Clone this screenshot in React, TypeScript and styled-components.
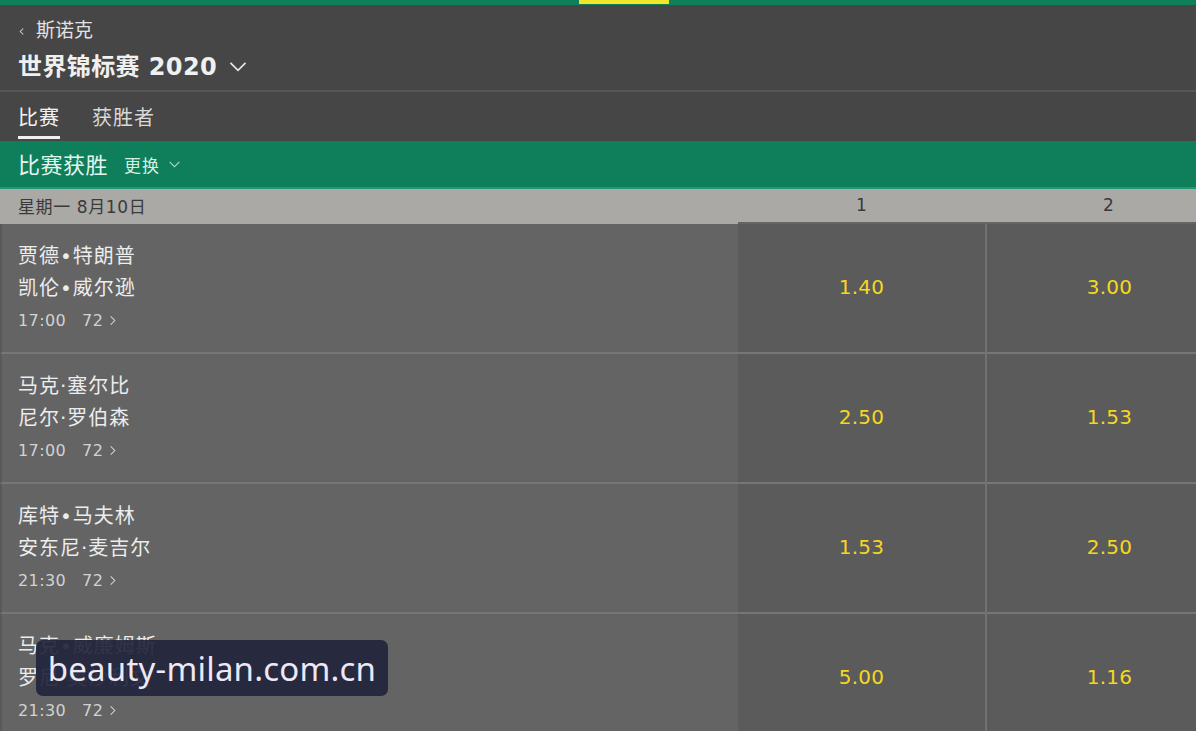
import * as React from 'react'
import styled, { createGlobalStyle } from 'styled-components'

const GlobalStyle = createGlobalStyle`
  html, body {
    margin: 0;
    padding: 0;
    background: #646464;
    overflow: hidden;
  }
  body {
    font-family: "DejaVu Sans", "Noto Sans CJK SC", sans-serif;
  }
`

type Match = {
  home: string
  away: string
  time: string
  markets: number
  odds: [string, string]
}

const matches: Match[] = [
  { home: '贾德•特朗普', away: '凯伦•威尔逊', time: '17:00', markets: 72, odds: ['1.40', '3.00'] },
  { home: '马克·塞尔比', away: '尼尔·罗伯森', time: '17:00', markets: 72, odds: ['2.50', '1.53'] },
  { home: '库特•马夫林', away: '安东尼·麦吉尔', time: '21:30', markets: 72, odds: ['1.53', '2.50'] },
  { home: '马克•威廉姆斯', away: '罗尼·奥沙利文', time: '21:30', markets: 72, odds: ['5.00', '1.16'] },
]

const Page = styled.div`
  position: relative;
  width: 1232px;
  min-height: 731px;
  background: #646464;
`

const TopBar = styled.div`
  position: relative;
  height: 5px;
  background: #0f7e5a;
  .active {
    position: absolute;
    left: 579px;
    top: 0;
    width: 90px;
    height: 4px;
    background: #f2e62a;
  }
`

const Header = styled.header`
  display: flex;
  flex-direction: column;
  height: 85px;
  padding: 0 18px;
  background: #464646;
  border-bottom: 2px solid #575757;
`

const Crumb = styled.div`
  display: flex;
  align-items: center;
  gap: 9px;
  margin-top: 12px;
  height: 22px;
  color: #e2e2e2;
  font-size: 19px;
  svg {
    margin-top: 7px;
  }
`

const Title = styled.h1`
  display: flex;
  align-items: center;
  gap: 11px;
  margin: 13px 0 0;
  color: #f0f0f0;
  font-size: 24px;
  font-weight: 700;
  line-height: 30px;
  letter-spacing: 0.4px;
`

const Tabs = styled.nav`
  display: flex;
  gap: 32px;
  height: 49px;
  padding: 0 18px;
  background: #464646;
`

const Tab = styled.div<{ $active?: boolean }>`
  display: flex;
  align-items: center;
  padding-top: 5px;
  color: ${(p) => (p.$active ? '#f4f4f4' : '#d8d8d8')};
  font-size: 20px;
  letter-spacing: 1px;
  box-sizing: border-box;
  border-bottom: 3px solid ${(p) => (p.$active ? '#f0f0f0' : 'transparent')};
  margin-bottom: 2px;
`

const MarketBar = styled.div`
  display: flex;
  align-items: center;
  gap: 16px;
  height: 43px;
  padding: 0 18px 3px;
  background: #0f7e5a;
  border-bottom: 2px solid #1f9a72;
  color: #e4f5ee;
  .name {
    font-size: 22px;
    letter-spacing: 0.5px;
  }
  .switch {
    display: flex;
    align-items: center;
    gap: 8px;
    padding-top: 3px;
    font-size: 17px;
    letter-spacing: 1px;
    color: #d6efe4;
  }
`

const Grid = styled.div`
  display: grid;
  grid-template-columns: 738px 247px 247px;
`

const DateRow = styled.div`
  display: contents;
  > div {
    height: 32px;
    display: flex;
    align-items: center;
    background: #aaa9a5;
    color: #3a3a3a;
    font-size: 17px;
  }
  > .date {
    padding: 0 18px 3px;
    letter-spacing: 0.6px;
  }
  > .col {
    justify-content: center;
    padding-bottom: 1px;
  }
`

const MatchCell = styled.div`
  display: flex;
  flex-direction: column;
  height: 130px;
  padding: 16px 16px 0;
  box-sizing: border-box;
  background: #646464;
  border-left: 2px solid #595959;
  border-bottom: 2px solid #767676;
  .player {
    color: #ececec;
    font-size: 20px;
    line-height: 32px;
    letter-spacing: 1px;
  }
  .meta {
    display: flex;
    align-items: center;
    gap: 16px;
    margin-top: 7px;
    color: #d2d2d2;
    font-size: 16px;
    letter-spacing: 0.4px;
  }
  .count {
    display: flex;
    align-items: center;
    gap: 4px;
  }
`

const OddsCell = styled.div`
  display: flex;
  align-items: center;
  justify-content: center;
  height: 130px;
  padding-bottom: 2px;
  box-sizing: border-box;
  background: #5b5b5b;
  border-left: 2px solid #717171;
  border-bottom: 2px solid #767676;
  color: #f5d81c;
  font-size: 20px;
  letter-spacing: 0.3px;
  &.first {
    border-left: none;
  }
`

const Watermark = styled.div`
  position: absolute;
  left: 36px;
  top: 640px;
  width: 352px;
  height: 56px;
  display: flex;
  align-items: center;
  justify-content: center;
  border-radius: 7px;
  background: rgba(34, 36, 60, 0.92);
  color: #ece8f4;
  font-family: "Noto Sans", sans-serif;
  font-size: 33px;
  letter-spacing: 0.2px;
`

const Chevron: React.FC<{ dir: 'left' | 'right' | 'down'; size: number; color: string; width?: number }> = ({
  dir,
  size,
  color,
  width = 1.4,
}) => {
  const d =
    dir === 'left' ? 'M7 2 L3 6 L7 10' : dir === 'right' ? 'M4 1.5 L8.5 6 L4 10.5' : 'M1.5 3.5 L6 8 L10.5 3.5'
  return (
    <svg width={size} height={size} viewBox="0 0 12 12" fill="none">
      <path d={d} stroke={color} strokeWidth={width} />
    </svg>
  )
}

const App: React.FC = () => (
  <Page>
    <GlobalStyle />
    <TopBar>
      <div className="active" />
    </TopBar>
    <Header>
      <Crumb>
        <Chevron dir="left" size={9} color="#cfcfcf" />
        <span>斯诺克</span>
      </Crumb>
      <Title>
        <span>世界锦标赛 2020</span>
        <Chevron dir="down" size={20} color="#e8e8e8" width={1} />
      </Title>
    </Header>
    <Tabs>
      <Tab $active>比赛</Tab>
      <Tab>获胜者</Tab>
    </Tabs>
    <MarketBar>
      <span className="name">比赛获胜</span>
      <span className="switch">
        更换
        <Chevron dir="down" size={13} color="#a9d9c4" width={1} />
      </span>
    </MarketBar>
    <Grid>
      <DateRow>
        <div className="date">星期一 8月10日</div>
        <div className="col">1</div>
        <div className="col">2</div>
      </DateRow>
      {matches.map((m) => (
        <React.Fragment key={m.home}>
          <MatchCell>
            <span className="player">{m.home}</span>
            <span className="player">{m.away}</span>
            <span className="meta">
              <span>{m.time}</span>
              <span className="count">
                {m.markets}
                <Chevron dir="right" size={11} color="#d6d6d6" width={1.1} />
              </span>
            </span>
          </MatchCell>
          <OddsCell className="first">{m.odds[0]}</OddsCell>
          <OddsCell>{m.odds[1]}</OddsCell>
        </React.Fragment>
      ))}
    </Grid>
    <Watermark>beauty-milan.com.cn</Watermark>
  </Page>
)

export default App
